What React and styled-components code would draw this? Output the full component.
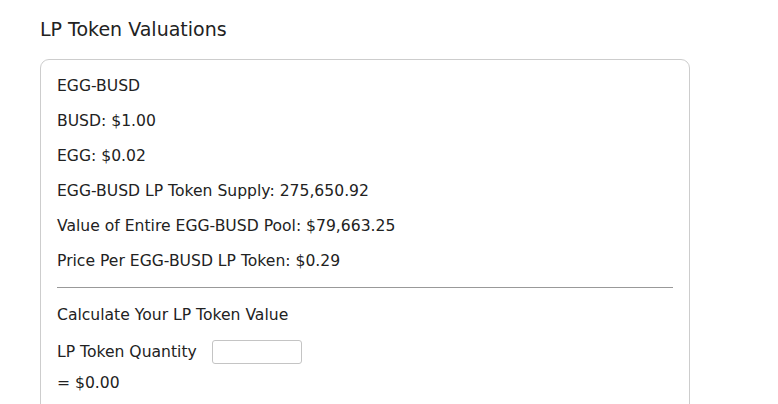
import React from "react"
import styled, { createGlobalStyle } from "styled-components"

const GlobalStyle = createGlobalStyle`
  body {
    margin: 0;
    background: #fff;
    font-family: "DejaVu Sans", sans-serif;
    color: #222;
  }
`

const Page = styled.div`
  padding: 17px 88px 0 40px;
`

const Title = styled.h2`
  margin: 0 0 18px;
  font-size: 19px;
  font-weight: 400;
  line-height: 24px;
  color: #222;
`

const Card = styled.div`
  border: 1px solid #cdcdcd;
  border-radius: 9px;
  padding: 17px 16px 20px;
  min-height: 330px;
`

const Line = styled.p`
  margin: 0 0 ${(p) => p.$gap || 16}px;
  font-size: 15.6px;
  line-height: 19px;
`

const Divider = styled.hr`
  margin: 4px 0 18px;
  border: none;
  border-top: 1px solid #999;
`

const QuantityRow = styled.div`
  display: flex;
  align-items: center;
  gap: 15px;
  margin: 0 0 10px;
  font-size: 15.6px;
  line-height: 19px;
`

const QuantityInput = styled.input`
  width: 90px;
  height: 24px;
  box-sizing: border-box;
  border: 1px solid #c4c4c4;
  border-radius: 3px;
  padding: 0 6px;
  font: inherit;
`

const values = [
  "EGG-BUSD",
  "BUSD: $1.00",
  "EGG: $0.02",
  "EGG-BUSD LP Token Supply: 275,650.92",
  "Value of Entire EGG-BUSD Pool: $79,663.25",
  "Price Per EGG-BUSD LP Token: $0.29",
]

export default function App() {
  return (
    <>
      <GlobalStyle />
      <Page>
        <Title>LP Token Valuations</Title>
        <Card>
          {values.map((v) => (
            <Line key={v}>{v}</Line>
          ))}
          <Divider />
          <Line $gap={15}>Calculate Your LP Token Value</Line>
          <QuantityRow>
            LP Token Quantity
            <QuantityInput type="text" />
          </QuantityRow>
          <Line>= $0.00</Line>
        </Card>
      </Page>
    </>
  )
}
